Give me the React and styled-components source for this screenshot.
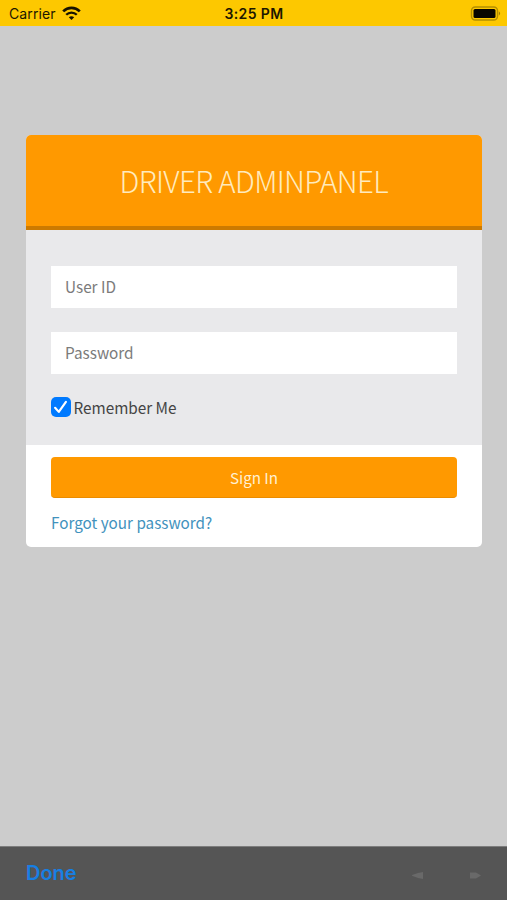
import { useState } from "react";
import styled, { createGlobalStyle } from "styled-components";

const GlobalStyle = createGlobalStyle`
  * {
    box-sizing: border-box;
  }
  body {
    margin: 0;
    background-color: #cccccc;
  }
`;

const Screen = styled.div`
  display: flex;
  flex-direction: column;
  height: 900px;
  overflow: hidden;
  background-color: #cccccc;
  font-family: "Noto Sans CJK SC", "Noto Sans", sans-serif;
`;

const StatusBar = styled.header`
  display: grid;
  grid-template-columns: 1fr auto 1fr;
  align-items: center;
  height: 25.5px;
  padding: 1px 6px 0 9px;
  background-color: #fdc800;
  color: #1c1700;
  font-family: Inter, "Liberation Sans", sans-serif;
  font-size: 14px;
  line-height: 23px;
`;

const Carrier = styled.div`
  display: flex;
  align-items: center;
  gap: 6px;
  padding-top: 1px;
  letter-spacing: 0.1px;
`;

const Clock = styled.div`
  margin-right: 2px;
  padding-top: 1px;
  font-weight: 600;
  letter-spacing: 0.4px;
`;

const BatterySlot = styled.div`
  display: flex;
  justify-content: flex-end;
`;

const Main = styled.main`
  flex: 1;
  padding: 109.5px 25.5px 0 26px;
`;

const Card = styled.form`
  overflow: hidden;
  border-radius: 5px;
  background-color: #ffffff;
`;

const CardHeader = styled.div`
  height: 94.5px;
  border-bottom: 4px solid #cc7a00;
  background-color: #ff9900;
`;

const Title = styled.h1`
  margin: 0;
  color: #ffebbd;
  font-size: 29.5px;
  font-weight: 300;
  line-height: 91px;
  letter-spacing: -0.65px;
  text-align: center;
  white-space: nowrap;
`;

const CardBody = styled.div`
  display: flex;
  flex-direction: column;
  gap: 24px;
  height: 215px;
  padding: 36.5px 24.5px 0 25px;
  background-color: #e9e9eb;
`;

const Field = styled.input`
  width: 100%;
  height: 42px;
  padding: 0 14px 2px;
  border: none;
  border-radius: 0;
  background-color: #ffffff;
  color: #444444;
  font-family: inherit;
  font-size: 15.3px;
  &::placeholder {
    color: #7b7b7b;
    opacity: 1;
  }
`;

const Remember = styled.label`
  display: flex;
  align-items: center;
  gap: 3px;
  height: 20px;
  margin-top: -1px;
  color: #444444;
  font-size: 15.3px;
  cursor: pointer;
`;

const HiddenCheckbox = styled.input`
  display: none;
`;

const CheckBox = styled.span`
  display: flex;
  width: 19.5px;
  height: 20px;
  margin-bottom: 1px;
  border-radius: 5px;
  background-color: ${(props) => (props.$checked ? "#007aff" : "#ffffff")};
`;

const CardFooter = styled.div`
  height: 102px;
  padding: 12px 24.5px 0 25px;
`;

const SignInButton = styled.button`
  display: block;
  width: 100%;
  height: 41px;
  padding: 0;
  border: none;
  border-bottom: 1px solid #ea8c00;
  border-radius: 4px;
  background-color: #ff9900;
  color: #fff0d2;
  font-family: inherit;
  font-size: 15.2px;
  cursor: pointer;
`;

const ForgotLink = styled.a`
  display: block;
  margin-top: 12px;
  color: #4292bd;
  font-size: 15.25px;
  line-height: 24px;
  text-decoration: none;
`;

const Toolbar = styled.footer`
  display: flex;
  align-items: center;
  justify-content: space-between;
  height: 54px;
  padding: 0 26px;
  border-top: 1px solid #7d7d7d;
  background-color: #555555;
`;

const DoneButton = styled.button`
  padding: 0 0 1px;
  border: none;
  background: none;
  color: #177fe4;
  font-family: Inter, "Liberation Sans", sans-serif;
  font-size: 20px;
  font-weight: 600;
  cursor: pointer;
`;

const Arrows = styled.div`
  display: flex;
  gap: 47px;
  margin-top: 3px;
`;

function WifiIcon() {
  return (
    <svg width="19" height="15" viewBox="0 0 19 15" fill="none" stroke="#171300">
      <path d="M1.2 5.4C5.8 .8 13.2 .8 17.8 5.4" strokeWidth="2.7" />
      <path d="M4.2 8.7C7.1 5.8 11.9 5.8 14.8 8.7" strokeWidth="2.3" />
      <path d="M6.8 11.3C8.4 9.8 10.6 9.8 12.2 11.3L9.5 14Z" fill="#171300" stroke="none" />
    </svg>
  );
}

function BatteryIcon() {
  return (
    <svg width="31" height="15" viewBox="0 0 31 15">
      <rect x="1.5" y="1" width="26" height="13" rx="3.8" fill="none" stroke="#b38e00" strokeWidth="1.4" />
      <rect x="3.5" y="3" width="22" height="9" rx="1.5" fill="#080600" />
      <path d="M28.8 5.3Q31.4 7.5 28.8 9.7Z" fill="#9c7c00" />
    </svg>
  );
}

function CheckIcon() {
  return (
    <svg width="20" height="20" viewBox="0 0 20 20" fill="none">
      <path d="M4.2 10.8L8 15L15.3 4.8" stroke="#ffffff" strokeWidth="2.2" strokeLinecap="round" strokeLinejoin="round" />
    </svg>
  );
}

function ArrowIcon({ flip }) {
  return (
    <svg width="11" height="7" viewBox="0 0 11 7" fill="#696969">
      <path d={flip ? "M0 .5H6L11 3.5L6 6.5H0Z" : "M11 0V7L6 6L0 3.8V3L6 1Z"} />
    </svg>
  );
}

function App() {
  const [userId, setUserId] = useState("");
  const [password, setPassword] = useState("");
  const [remember, setRemember] = useState(true);

  return (
    <Screen>
      <GlobalStyle />
      <StatusBar>
        <Carrier>
          Carrier
          <WifiIcon />
        </Carrier>
        <Clock>3:25 PM</Clock>
        <BatterySlot>
          <BatteryIcon />
        </BatterySlot>
      </StatusBar>
      <Main>
        <Card onSubmit={(e) => e.preventDefault()}>
          <CardHeader>
            <Title>DRIVER ADMINPANEL</Title>
          </CardHeader>
          <CardBody>
            <Field
              type="text"
              placeholder="User ID"
              value={userId}
              onChange={(e) => setUserId(e.target.value)}
            />
            <Field
              type="password"
              placeholder="Password"
              value={password}
              onChange={(e) => setPassword(e.target.value)}
            />
            <Remember>
              <HiddenCheckbox
                type="checkbox"
                checked={remember}
                onChange={() => setRemember(!remember)}
              />
              <CheckBox $checked={remember}>{remember && <CheckIcon />}</CheckBox>
              Remember Me
            </Remember>
          </CardBody>
          <CardFooter>
            <SignInButton type="submit">Sign In</SignInButton>
            <ForgotLink href="#">Forgot your password?</ForgotLink>
          </CardFooter>
        </Card>
      </Main>
      <Toolbar>
        <DoneButton>Done</DoneButton>
        <Arrows>
          <ArrowIcon />
          <ArrowIcon flip />
        </Arrows>
      </Toolbar>
    </Screen>
  );
}

export default App;
